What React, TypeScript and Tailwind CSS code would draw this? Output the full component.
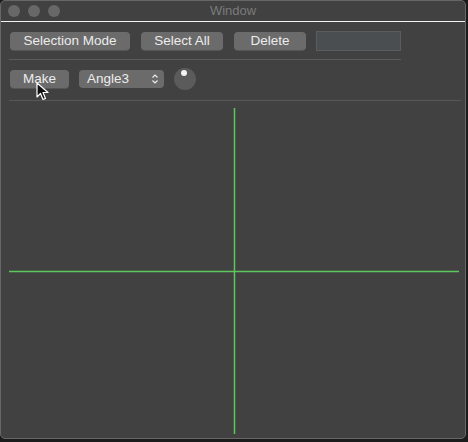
const font = { fontFamily: '"Liberation Sans", Arial, sans-serif' };

function Btn({ label, w }: { label: string; w: string }) {
  return (
    <div
      className={`${w} h-[18px] rounded-[4px] bg-[#6b6b6b] flex items-center justify-center text-[13.5px] text-[#ececec] shadow-[0_1px_0_#555]`}
    >
      {label}
    </div>
  );
}

function Cursor() {
  return (
    <svg width="14" height="20" viewBox="0 0 14 20" className="absolute left-[36px] top-[82px]">
      <path d="M1 1 L1 15 L4.5 11.5 L7 17.5 L9.5 16.5 L7 10.5 L12 10.5 Z" fill="#111" stroke="#fff" strokeWidth="1.2" strokeLinejoin="round" />
    </svg>
  );
}

export default function App() {
  return (
    <div className="w-[468px] h-[442px] bg-[#1b1b1b] relative" style={font}>
      <div className="w-[466px] h-[439px] rounded-[5px] border border-[#676767] bg-[#414141] flex flex-col overflow-hidden">
        {/* title bar */}
        <div className="h-[20px] relative flex items-center gap-[8px] pl-[7px] shrink-0">
          <div className="w-[12px] h-[12px] rounded-full bg-[#686868]" />
          <div className="w-[12px] h-[12px] rounded-full bg-[#686868]" />
          <div className="w-[12px] h-[12px] rounded-full bg-[#686868]" />
          <div className="absolute inset-0 flex items-center justify-center text-[13px] text-[#7b7b7b]">Window</div>
        </div>
        <div className="h-[1px] bg-[#f2f2f2] shrink-0" />

        {/* row 1 */}
        <div className="flex items-center gap-[11px] pl-[9px] pt-[9px] shrink-0">
          <Btn label="Selection Mode" w="w-[120px]" />
          <Btn label="Select All" w="w-[82px]" />
          <Btn label="Delete" w="w-[72px]" />
          <div className="w-[85px] h-[20px] ml-[-1px] bg-[#4a4e50] border border-[#5a5d5f]" />
        </div>
        <div className="h-[1px] bg-[#5b5b5b] ml-[8px] w-[392px] mt-[8px] shrink-0" />

        {/* row 2 */}
        <div className="flex items-center pl-[9px] pt-[8px] shrink-0">
          <Btn label="Make" w="w-[59px]" />
          <div className="w-[85px] h-[18px] ml-[10px] rounded-[4px] bg-[#6b6b6b] flex items-center justify-between pl-[8px] pr-[5px] text-[13.5px] text-[#ececec]">
            <span>Angle3</span>
            <svg width="8" height="12" viewBox="0 0 8 12">
              <path d="M1.5 4.5 L4 2 L6.5 4.5 M1.5 7.5 L4 10 L6.5 7.5" fill="none" stroke="#ececec" strokeWidth="1.2" />
            </svg>
          </div>
          <div className="w-[22px] h-[22px] ml-[10px] rounded-full bg-[#5b5b5b] relative">
            <div className="absolute left-[7px] top-[2px] w-[6px] h-[6px] rounded-full bg-[#f4f4f4]" />
          </div>
        </div>
        <div className="h-[1px] bg-[#575757] ml-[8px] w-[452px] mt-[10px] shrink-0" />

        {/* canvas */}
        <div className="flex-1">
          <svg width="464" height="336" viewBox="0 0 464 336">
            <line x1="233.5" y1="7" x2="233.5" y2="333" stroke="#5cc85c" strokeWidth="1.5" />
            <line x1="8" y1="170.5" x2="458" y2="170.5" stroke="#5cc85c" strokeWidth="1.5" />
          </svg>
        </div>
      </div>
      <Cursor />
    </div>
  );
}
